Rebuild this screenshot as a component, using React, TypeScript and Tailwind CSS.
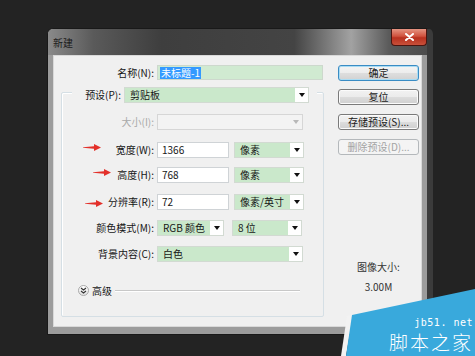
import React from 'react';

const DropArrow = ({ color = '#111' }: { color?: string }) => (
  <svg width="6" height="4" viewBox="0 0 6 4">
    <path d="M0 0h6L3 4z" fill={color} />
  </svg>
);

// red annotation arrow pointing right
const RedArrow = ({ className }: { className: string }) => (
  <svg className={`absolute ${className}`} width="18" height="7" viewBox="0 0 18 7">
    <path d="M0 3.2 L11 2.2 L11 0 L18 3.5 L11 7 L11 4.8 L0 3.8 Z" fill="#e3302a" />
  </svg>
);

const Combo = ({ text, className, disabled }: { text: string; className: string; disabled?: boolean }) => (
  <div className={`flex h-[16px] border ${disabled ? 'border-[#d6d6d6] bg-[#f3f3f3]' : 'border-[#d2dad2] bg-white'} ${className}`}>
    <div className={`flex-1 flex items-center pl-[5px] ${disabled ? '' : 'bg-[#cae8cb]'}`}>{text}</div>
    <div className="w-[13px] flex items-center justify-center">
      <DropArrow color={disabled ? '#b8b8b8' : '#111'} />
    </div>
  </div>
);

const Field = ({ value }: { value: string }) => (
  <div className="w-[72px] h-[16px] border border-[#cfd3d6] bg-white flex items-center pl-[4px]">{value}</div>
);

const Row = ({ label, className, children, disabled }: { label: string; className: string; children: React.ReactNode; disabled?: boolean }) => (
  <div className={`relative flex items-center ${className}`}>
    <div className={`w-[95px] text-right pr-[3px] ${disabled ? 'text-[#a9a9a9]' : ''}`}>{label}</div>
    {children}
  </div>
);

const Button = ({ label, kind = 'normal', className = '' }: { label: string; kind?: 'normal' | 'default' | 'disabled'; className?: string }) => {
  const look =
    kind === 'default'
      ? 'border-[#3a8cc4] shadow-[inset_0_0_0_1px_#a9dcf4] bg-[linear-gradient(#f4f4f4_0%,#ececec_50%,#dedede_50%,#d2d2d2_100%)] text-[#1a1a1a]'
      : kind === 'disabled'
      ? 'border-[#b4b8bb] bg-[#f4f4f4] text-[#a3a3a3]'
      : 'border-[#7a7a7a] shadow-[inset_0_0_0_1px_#fbfbfb] bg-[linear-gradient(#f2f2f2_0%,#ebebeb_50%,#dddddd_50%,#cfcfcf_100%)] text-[#1a1a1a]';
  return (
    <div className={`h-[16px] w-[81px] rounded-[3px] border flex items-center justify-center ${look} ${className}`}>{label}</div>
  );
};

export default function App() {
  return (
    <div className="relative w-[475px] h-[356px] overflow-hidden bg-[#232323] font-['Noto_Sans_CJK_SC',sans-serif] text-[10px] leading-none text-[#161616]">
      {/* dialog window */}
      <div className="ml-[47px] mt-[28px] w-[386px] h-[307px] rounded-t-[6px] border border-[#191919] border-r-[6px] border-r-[#3b3b3b] bg-[#9c9c9c] flex flex-col">
        <div className="h-[26px] flex justify-between items-start pl-[5px] rounded-t-[5px] bg-[linear-gradient(90deg,#8a8a8a_0%,#5a5a5a_12%,#3e3e3e_30%,#444444_65%,#a2a2a2_80%,#5a5a5a_90%,#4c4c4c_100%)]">
          <span className="pt-[9px] text-[#1b1b1b]">新建</span>
          <div className="w-[36px] h-[17px] rounded-b-[4px] border border-t-0 border-[#4a1510] bg-[linear-gradient(#e59482_0%,#d0523e_45%,#b8311f_55%,#c8503a_100%)] flex items-center justify-center">
            <svg width="9" height="8" viewBox="0 0 9 8">
              <path d="M1 1L8 7M8 1L1 7" stroke="#ffffff" strokeWidth="2" strokeLinecap="round" />
            </svg>
          </div>
        </div>

        {/* client area */}
        <div className="mx-[5px] h-[272px] bg-[#f0f0f0] shadow-[inset_0_0_0_1px_#d9d9d9] flex">
          <div className="w-[273px] pt-[10px]">
            <div className="flex items-center h-[15px]">
              <div className="w-[104px] text-right pr-[3px]">名称(N):</div>
              <div className="w-[166px] h-[15px] border border-[#cdd8cd] bg-[#d0ead1] flex items-center pl-[2px]">
                <span className="bg-[#3399ff] text-white px-[1px] h-[12px] flex items-center">未标题-1</span>
              </div>
            </div>

            {/* group box */}
            <div className="ml-[8px] mt-[12px] w-[263px] h-[225px] border border-[#d5dfe5] rounded-[2px] shadow-[inset_1px_1px_0_#ffffff]">
              <div className="-mt-[6px] ml-[10px] w-[245px] h-[16px] bg-[#f0f0f0] flex items-center pr-[5px]">
                <div className="w-[52px] text-right pr-[3px]">预设(P):</div>
                <Combo text="剪贴板" className="w-[185px]" />
              </div>

              <Row label="大小(I):" className="mt-[11px]" disabled>
                <Combo text="" className="w-[146px]" disabled />
              </Row>
              <Row label="宽度(W):" className="mt-[12px]">
                <RedArrow className="left-[21px] top-[2px]" />
                <Field value="1366" />
                <Combo text="像素" className="ml-[5px] w-[70px]" />
              </Row>
              <Row label="高度(H):" className="mt-[9px]">
                <RedArrow className="left-[31px] top-[2px]" />
                <Field value="768" />
                <Combo text="像素" className="ml-[5px] w-[70px]" />
              </Row>
              <Row label="分辨率(R):" className="mt-[11px]">
                <RedArrow className="left-[23px] top-[6px]" />
                <Field value="72" />
                <Combo text="像素/英寸" className="ml-[5px] w-[70px]" />
              </Row>
              <Row label="颜色模式(M):" className="mt-[10px]">
                <Combo text="RGB 颜色" className="w-[67px]" />
                <Combo text="8 位" className="ml-[8px] w-[70px]" />
              </Row>
              <Row label="背景内容(C):" className="mt-[10px]">
                <Combo text="白色" className="w-[146px]" />
              </Row>

              <div className="mt-[23px] ml-[16px] flex items-center h-[11px]">
                <div className="w-[11px] h-[11px] rounded-full border border-[#a9a9a9] bg-[linear-gradient(#ffffff,#e2e2e2)] flex items-center justify-center">
                  <svg width="7" height="7" viewBox="0 0 7 7">
                    <path d="M1 1L3.5 3L6 1M1 4L3.5 6L6 4" fill="none" stroke="#333" strokeWidth="1.1" />
                  </svg>
                </div>
                <span className="ml-[3px]">高级</span>
                <div className="ml-[3px] w-[185px] h-[2px] border-t border-[#c8c8c8] border-b border-b-white" />
              </div>
            </div>
          </div>

          {/* right column */}
          <div className="ml-[12px] w-[81px] pt-[10px] flex flex-col">
            <Button label="确定" kind="default" />
            <Button label="复位" className="mt-[8px]" />
            <Button label="存储预设(S)..." className="mt-[9px]" />
            <Button label="删除预设(D)..." kind="disabled" className="mt-[9px]" />
            <div className="mt-[107px] text-center text-[#333]">图像大小:</div>
            <div className="mt-[10px] text-center text-[#333]">3.00M</div>
          </div>
        </div>
      </div>

      {/* watermark */}
      <svg className="absolute left-[330px] top-[280px]" width="145" height="76" viewBox="0 0 145 76">
        <path d="M17 36 L23 35 L16 76 L11 76 Z" fill="#f2f2f2" />
        <path d="M22 35 L145 9 L145 76 L16 76 Z" fill="#39a9dc" />
      </svg>
      <div className="absolute right-[2px] top-[318px] flex flex-col items-end gap-[2px] text-white">
        <div className="text-[10px] leading-[10px] font-['DejaVu_Sans_Mono',monospace] tracking-[0.5px]">jb51. net</div>
        <div className="text-[19px] leading-[24px] font-light tracking-[2px]">脚本之家</div>
      </div>
    </div>
  );
}
